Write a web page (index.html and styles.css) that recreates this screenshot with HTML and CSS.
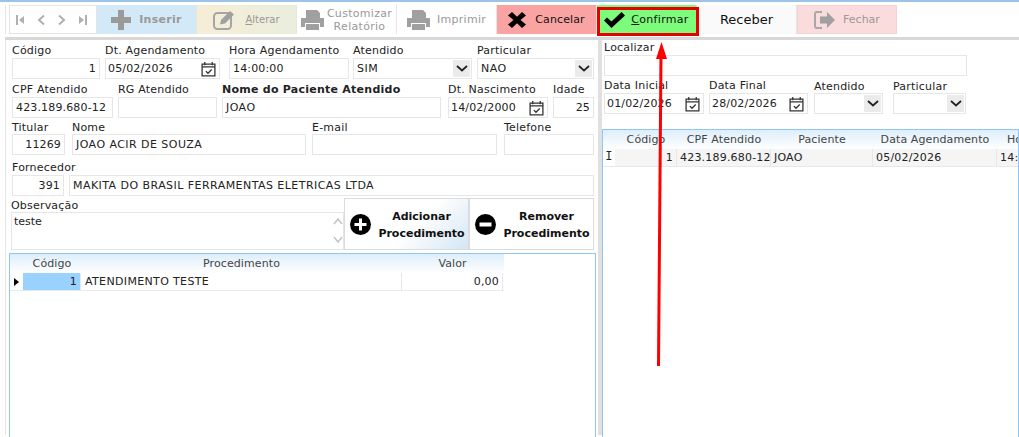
FILE: index.html
```html
<!DOCTYPE html>
<html>
<head>
  <meta charset="utf-8">
  <link rel="stylesheet" href="styles.css">
</head>
<body>
  <div class="toolbar">
    <div class="nav-btns">
      <svg width="8" height="10" viewBox="0 0 8 10"><path d="M0 0h2v10H0zM8 1v8L3 5z"/></svg>
      <svg width="8" height="12" viewBox="0 0 8 12"><path d="M7 1.500 2 6l5 4.500" class="chev"/></svg>
      <svg width="8" height="12" viewBox="0 0 8 12"><path d="M1 1.500 6 6l-5 4.500" class="chev"/></svg>
      <svg width="8" height="10" viewBox="0 0 8 10"><path d="M6 0h2v10H6zM0 1v8l5-4z"/></svg>
    </div>
    <div class="tool-btn inserir">
      <svg width="20" height="20" viewBox="0 0 20 20"><path d="M7 0h6v7h7v6h-7v7H7v-7H0V7h7z" fill="#9a9a9a"/></svg>
      <b>Inserir</b>
    </div>
    <div class="tool-btn alterar">
      <svg width="25" height="20" viewBox="0 0 25 20"><rect x="1" y="3" width="17" height="16" rx="3.500" fill="none" stroke="#a5a5a5" stroke-width="2"/><path d="M8 10 17 1l4 3.500-9 9-5 1z" fill="#a0a0a0"/></svg>
      <span class="narrow"><u>A</u>lterar</span>
    </div>
    <div class="tool-btn customizar">
      <svg class="printer" width="23" height="22" viewBox="0 0 23 22"><path d="M5 1h11l3 3v5H5zM0 9h23v9h-4v-4H4v4H0zM5 15h13v6H5z" fill="#a0a0a0"/></svg>
      <span class="two-line">Customizar<br>Relatório</span>
    </div>
    <div class="tool-btn imprimir">
      <svg class="printer" width="23" height="22" viewBox="0 0 23 22"><path d="M5 1h11l3 3v5H5zM0 9h23v9h-4v-4H4v4H0zM5 15h13v6H5z" fill="#a0a0a0"/></svg>
      <span>Imprimir</span>
    </div>
    <div class="tool-btn cancelar">
      <svg width="18" height="16" viewBox="0 0 18 16"><path d="M4 0 9 4.800 14 0l4 3.500L12.500 8l5.500 4.500-4 3.500-5-4.800L4 16l-4-3.500L5.500 8 0 3.500z" fill="#000"/></svg>
      <span>Cancelar</span>
    </div>
    <div class="tool-btn confirmar">
      <svg width="21" height="16" viewBox="0 0 21 16"><path d="M0 8.500 3 5.500l4.500 4L17.500 0 21 3.500 7.500 16z" fill="#000"/></svg>
      <span><u>C</u>onfirmar</span>
    </div>
    <div class="tool-btn receber"><span>Receber</span></div>
    <div class="tool-btn fechar">
      <svg width="22" height="18" viewBox="0 0 22 18"><path d="M8 1H3Q1 1 1 3v12q0 2 2 2h5" fill="none" stroke="#a8a8a8" stroke-width="2"/><path d="M6 5.500h7V1l8 8-8 8v-4.500H6z" fill="#a0a0a0"/></svg>
      <span>Fechar</span>
    </div>
  </div>
  <div class="sep"></div>

  <div class="main">
    <div class="left">
      <div class="row r1">
        <div class="field w-cod"><label>Código</label><div class="input num">1</div></div>
        <div class="field w-dtag"><label>Dt. Agendamento</label><div class="input date">05/02/2026<svg class="cal" viewBox="0 0 14 15"><use href="#cal"/></svg></div></div>
        <div class="field w-hora"><label>Hora Agendamento</label><div class="input">14:00:00</div></div>
        <div class="field w-atend"><label>Atendido</label><div class="input select caps">SIM<span class="drop"><svg viewBox="0 0 12 7"><use href="#chev"/></svg></span></div></div>
        <div class="field w-part"><label>Particular</label><div class="input select caps">NAO<span class="drop"><svg viewBox="0 0 12 7"><use href="#chev"/></svg></span></div></div>
      </div>
      <div class="row r2">
        <div class="field w-cpf"><label>CPF Atendido</label><div class="input">423.189.680-12</div></div>
        <div class="field w-rg"><label>RG Atendido</label><div class="input"></div></div>
        <div class="field w-nome"><label class="strong">Nome do Paciente Atendido</label><div class="input caps">JOAO</div></div>
        <div class="field w-nasc"><label>Dt. Nascimento</label><div class="input date">14/02/2000<svg class="cal" viewBox="0 0 14 15"><use href="#cal"/></svg></div></div>
        <div class="field w-idade"><label>Idade</label><div class="input num">25</div></div>
      </div>
      <div class="row r3">
        <div class="field w-tit"><label>Titular</label><div class="input num">11269</div></div>
        <div class="field w-tnome"><label>Nome</label><div class="input caps">JOAO ACIR DE SOUZA</div></div>
        <div class="field w-mail"><label>E-mail</label><div class="input"></div></div>
        <div class="field w-tel"><label>Telefone</label><div class="input"></div></div>
      </div>
      <div class="row r4">
        <div class="field w-forn"><label>Fornecedor</label><div class="input num">391</div></div>
        <div class="field w-fnome"><label>&nbsp;</label><div class="input caps">MAKITA DO BRASIL FERRAMENTAS ELETRICAS LTDA</div></div>
      </div>
      <div class="row r5">
        <div class="field w-obs">
          <label>Observação</label>
          <div class="textarea">teste
            <svg class="scroll" width="10" height="36" viewBox="0 0 10 36"><path d="M1 11l4-5 4 5M1 24l4 5 4-5" fill="none" stroke="#c4c4c4" stroke-width="1.500"/></svg>
          </div>
        </div>
        <div class="proc-btn add">
          <svg width="21" height="21" viewBox="0 0 21 21"><circle cx="10.500" cy="10.500" r="10.500"/><path d="M9 4.500h3V9h4.500v3H12v4.500H9V12H4.500V9H9z" fill="#fff"/></svg>
          <b>Adicionar<br>Procedimento</b>
        </div>
        <div class="proc-btn">
          <svg width="21" height="21" viewBox="0 0 21 21"><circle cx="10.500" cy="10.500" r="10.500"/><path d="M4.500 8.500h12v4h-12z" fill="#fff"/></svg>
          <b>Remover<br>Procedimento</b>
        </div>
      </div>
      <div class="grid grid-proc">
        <div class="grid-head">
          <span class="c-ind"></span><span class="c-pcod">Código</span><span class="c-pname">Procedimento</span><span class="c-pval">Valor</span>
        </div>
        <div class="grid-row">
          <span class="c-ind"><svg width="5" height="8" viewBox="0 0 5 8"><path d="M0 0l5 4-5 4z"/></svg></span>
          <span class="c-pcod sel">1</span><span class="c-pname">ATENDIMENTO TESTE</span><span class="c-pval">0,00</span>
        </div>
      </div>
    </div>

    <div class="right">
      <div class="row rr1">
        <div class="field w-loc"><label>Localizar</label><div class="input"></div></div>
      </div>
      <div class="row rr2">
        <div class="field w-ini"><label>Data Inicial</label><div class="input date">01/02/2026<svg class="cal" viewBox="0 0 14 15"><use href="#cal"/></svg></div></div>
        <div class="field w-fim"><label>Data Final</label><div class="input date">28/02/2026<svg class="cal" viewBox="0 0 14 15"><use href="#cal"/></svg></div></div>
        <div class="field w-ratend"><label>Atendido</label><div class="input select"><span class="drop"><svg viewBox="0 0 12 7"><use href="#chev"/></svg></span></div></div>
        <div class="field w-rpart"><label>Particular</label><div class="input select"><span class="drop"><svg viewBox="0 0 12 7"><use href="#chev"/></svg></span></div></div>
      </div>
      <div class="grid grid-list">
        <div class="grid-head">
          <span class="c-ind"></span><span class="c-cod">Código</span><span class="c-cpf">CPF Atendido</span><span class="c-pac">Paciente</span><span class="c-dat">Data Agendamento</span><span class="c-hor">Hora</span>
        </div>
        <div class="grid-row">
          <span class="c-ind cursor">I</span><span class="c-cod alt">1</span><span class="c-cpf alt">423.189.680-12</span><span class="c-pac alt">JOAO</span><span class="c-dat alt">05/02/2026</span><span class="c-hor alt">14:00</span>
        </div>
      </div>
    </div>
  </div>

  <!-- marcacoes do print -->
  <div class="confirm-mark"></div>
  <svg class="arrow" width="20" height="330" viewBox="0 0 20 330"><path d="M6.500 324 9 12" stroke="#f00" stroke-width="3" fill="none"/><path d="M9.500 0 15 17H4z" fill="#f00"/></svg>

  <svg width="0" height="0" class="defs">
    <symbol id="cal" viewBox="0 0 14 15"><path d="M1 3h12v11H1zM1 5.500h12M3.500 1v3M10.500 1v3M4.500 9.500 6.500 11.500 10 8" fill="none" stroke="#333" stroke-width="1.200"/></symbol>
    <symbol id="chev" viewBox="0 0 12 7"><path d="M1 1l5 4.500L11 1" fill="none" stroke="#222" stroke-width="1.800"/></symbol>
  </svg>
</body>
</html>
```

FILE: styles.css
```css
html, body {
  margin: 0;
  padding: 0;
  height: 100%;
}

body {
  position: relative;
  width: 1019px;
  height: 437px;
  overflow: hidden;
  background: #fff;
  border-top: 2px solid #9cc4e8;
  box-sizing: border-box;
  font-family: "DejaVu Sans", sans-serif;
  font-size: 11px;
  color: #222;
}

/* toolbar */
.toolbar {
  display: flex;
  height: 29px;
  margin: 3px 0 0 5px;
  padding-left: 3px;
  border-left: 1px solid #e4e4e4;
}

.nav-btns {
  width: 88px;
  box-sizing: border-box;
  border: 1px solid #e4e4e4;
  display: flex;
  align-items: center;
  gap: 13px;
  padding-left: 6px;
}

.nav-btns svg {
  fill: #b0b0b0;
}

.chev {
  fill: none;
  stroke: #b0b0b0;
  stroke-width: 2;
}

.tool-btn {
  width: 100px;
  box-sizing: border-box;
  display: flex;
  align-items: center;
  justify-content: center;
  gap: 7px;
  color: #999;
  border-right: 1px solid #e6e6e6;
  letter-spacing: 0.3px;
}

.inserir { background: #d4e9f7; gap: 8px; }
.alterar { background: linear-gradient(90deg, #f6edd6, #eaeedd); }
.customizar { gap: 3px; }
.cancelar { background: #f9a3a3; color: #111; letter-spacing: 0.1px; gap: 9px; }
.confirmar { background: #7dfb7a; color: #111; gap: 6px; }
.receber { background: #fafafa; color: #111; font-size: 13px; letter-spacing: 0; }
.fechar { background: #fbdcdc; border: 1px solid #f6d2d2; letter-spacing: 0; }

.narrow {
  font-size: 10px;
  letter-spacing: 0;
}

.two-line {
  line-height: 13px;
  text-align: center;
}

.sep {
  height: 3px;
  margin: 3px 0 0 5px;
  background: #d8d8d8;
}

/* main panels */
.main {
  display: flex;
  height: 395px;
}

.left {
  flex: none;
  width: 586px;
  margin-left: 5px;
  border-left: 1px solid #e4e4e4;
  padding-left: 6px;
}

.right {
  flex: 1;
  min-width: 0;
  border-left: 4px solid #e0e0e0;
}

.row {
  display: flex;
}

.field {
  display: flex;
  flex-direction: column;
  flex: none;
}

.field label {
  height: 11px;
  line-height: 11px;
  margin-bottom: 2px;
  white-space: nowrap;
  letter-spacing: 0.2px;
}

.field label.strong {
  font-weight: bold;
  letter-spacing: 0.25px;
}

.input {
  position: relative;
  height: 21px;
  box-sizing: border-box;
  border: 1px solid #e6e6e6;
  background: #fff;
  padding: 0 3px;
  line-height: 20px;
  white-space: nowrap;
  overflow: hidden;
  letter-spacing: 0.15px;
}

.caps { letter-spacing: 0.45px; }
.num { text-align: right; }
.date { padding-left: 2px; }

.cal {
  position: absolute;
  right: 3px;
  top: 2px;
  width: 15px;
  height: 16px;
}

.drop {
  position: absolute;
  right: 1px;
  top: 1px;
  bottom: 1px;
  width: 17px;
  background: #ebebeb;
  display: flex;
  align-items: center;
  justify-content: center;
}

.drop svg {
  width: 12px;
  height: 7px;
}

.r1 { margin-top: 5px; }
.r2 { margin-top: 5px; }
.r3 { margin-top: 4px; }
.r3 label { margin-bottom: 1px; }
.r4 { margin-top: 7px; }
.r5 { margin-top: 2px; margin-left: -1px; align-items: flex-end; }
.r5 label { margin-bottom: 1px; }

.w-cod { width: 88px; margin-right: 5px; }
.w-dtag { width: 115px; margin-right: 9px; }
.w-hora { width: 120px; margin-right: 4px; }
.w-atend { width: 119px; margin-right: 5px; }
.w-part { width: 117px; }

.w-cpf { width: 101px; margin-right: 5px; }
.w-rg { width: 99px; margin-right: 5px; }
.w-nome { width: 219px; margin-right: 7px; }
.w-nasc { width: 100px; margin-right: 5px; }
.w-idade { width: 41px; }

.w-tit { width: 53px; margin-right: 7px; }
.w-tnome { width: 234px; margin-right: 6px; }
.w-mail { width: 185px; margin-right: 7px; }
.w-tel { width: 90px; }

.w-forn { width: 52px; margin-right: 5px; }
.w-fnome { width: 525px; }

.w-obs { width: 333px; }

.textarea {
  position: relative;
  height: 38px;
  box-sizing: border-box;
  border: 1px solid #e6e6e6;
  padding: 2px;
  line-height: 13px;
}

.scroll {
  position: absolute;
  right: 0;
  top: 0;
}

.proc-btn {
  width: 125px;
  height: 52px;
  box-sizing: border-box;
  border: 1px solid #dcdcdc;
  display: flex;
  align-items: center;
  gap: 7px;
  padding-left: 5px;
  color: #111;
  line-height: 17px;
  text-align: center;
}

.proc-btn b {
  flex: 1;
  padding: 2px 3px 0 0;
}

.proc-btn.add {
  background: linear-gradient(135deg, #fff 55%, #d3e6f4);
}

/* grids */
.grid {
  border: 1px solid #8fc6f2;
  border-bottom: none;
  box-sizing: border-box;
}

.grid-proc {
  width: 587px;
  height: 185px;
  margin: 3px 0 0 -3px;
}

.grid-list {
  height: 308px;
  margin-top: 15px;
  overflow: hidden;
}

.grid-head, .grid-row {
  display: flex;
  white-space: nowrap;
}

.grid-head {
  height: 19px;
  line-height: 20px;
  color: #444;
  text-align: center;
  background: linear-gradient(#ddeefb, #fff);
  letter-spacing: 0.1px;
}

.grid-proc .grid-head, .grid-proc .grid-row {
  width: 494px;
}

.grid-row {
  height: 18px;
  line-height: 17px;
  border-bottom: 1px solid #e8e8e8;
  box-sizing: border-box;
  letter-spacing: 0.2px;
}

.grid-row span {
  flex: none;
  box-sizing: border-box;
  padding: 0 3px;
  overflow: hidden;
}

.grid-head span {
  flex: none;
  overflow: hidden;
}

.grid-row span + span {
  border-right: 1px solid #e8e8e8;
}

.c-ind {
  display: flex;
  align-items: center;
  justify-content: center;
}

.grid-proc .c-ind { width: 13px; }
.grid-list .c-ind { width: 12px; }

.cursor { font-family: "Liberation Mono", monospace; font-size: 12px; }

.c-pcod { width: 58px; }
.c-pname { width: 321px; }
.c-pval { width: 101px; }
.grid-row .c-pcod, .grid-row .c-pval, .grid-row .c-cod { text-align: right; }
.grid-row .c-pname { text-align: left; padding-left: 4px; letter-spacing: 0.35px; }

.sel { background: #99d1ff; }
.alt { background: #f5f5f5; }

.c-cod { width: 62px; }
.c-cpf { width: 94px; }
.c-pac { width: 102px; }
.c-dat { width: 124px; }
.grid-row span.c-hor { width: 22px; border-right: none; white-space: nowrap; }
.grid-head .c-hor { width: 22px; padding-left: 10px; text-align: left; }

/* right rows */
.rr1 { margin-top: 2px; padding-left: 2px; }
.rr2 { margin-top: 4px; padding-left: 2px; }
.w-loc { width: 363px; }
.w-ini { width: 100px; margin-right: 5px; }
.w-fim { width: 99px; margin-right: 6px; }
.w-ratend { width: 69px; margin-right: 10px; }
.w-rpart { width: 73px; }
.w-ratend label, .w-rpart label { margin-top: 1px; margin-bottom: 1px; }

/* annotations */
.confirm-mark {
  position: absolute;
  left: 597px;
  top: 5px;
  width: 102px;
  height: 29px;
  box-sizing: border-box;
  border: 3px solid #e80000;
}

.arrow {
  position: absolute;
  left: 652px;
  top: 40px;
}

.defs {
  position: absolute;
}
```
